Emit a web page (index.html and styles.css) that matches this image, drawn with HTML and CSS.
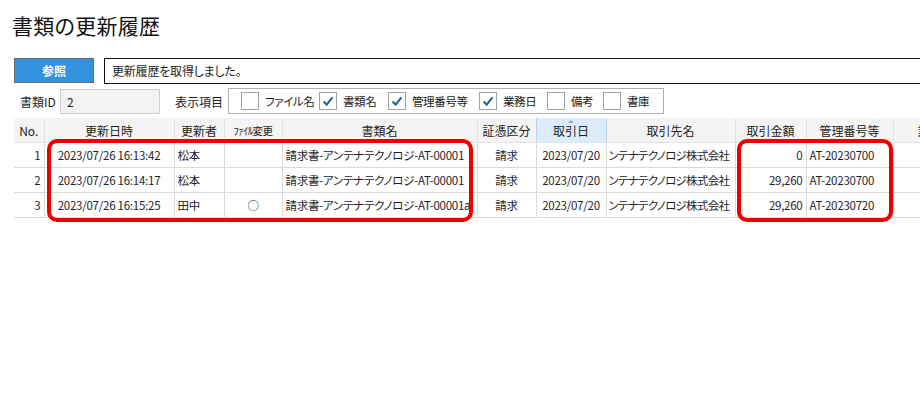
FILE: index.html
```html
<!DOCTYPE html>
<html lang="ja">
<head>
<meta charset="utf-8">
<link rel="stylesheet" href="styles.css">
</head>
<body>
<div class="page">
  <h1 class="title">書類の更新履歴</h1>
  <div class="toolbar">
    <button class="btn">参照</button>
    <div class="message">更新履歴を取得しました。</div>
  </div>
  <div class="filters">
    <span class="lbl lbl-id">書類ID</span>
    <div class="idbox">2</div>
    <span class="lbl lbl-items">表示項目</span>
    <div class="group">
      <span class="cb"></span><span class="cbl w1">ファイル名</span>
      <span class="cb on"><svg viewBox="0 0 18 18"><path d="M4 9.5 L7.5 13 L14 5" fill="none" stroke="#1f63a8" stroke-width="2.4"/></svg></span><span class="cbl w2">書類名</span>
      <span class="cb on"><svg viewBox="0 0 18 18"><path d="M4 9.5 L7.5 13 L14 5" fill="none" stroke="#1f63a8" stroke-width="2.4"/></svg></span><span class="cbl w3">管理番号等</span>
      <span class="cb on"><svg viewBox="0 0 18 18"><path d="M4 9.5 L7.5 13 L14 5" fill="none" stroke="#1f63a8" stroke-width="2.4"/></svg></span><span class="cbl w4">業務日</span>
      <span class="cb"></span><span class="cbl w5">備考</span>
      <span class="cb"></span><span class="cbl w6">書庫</span>
    </div>
  </div>
  <div class="gridwrap">
    <table class="grid">
      <colgroup>
        <col class="c-no"><col class="c-dt"><col class="c-user"><col class="c-file"><col class="c-name"><col class="c-kind"><col class="c-date"><col class="c-partner"><col class="c-amt"><col class="c-code"><col class="c-rest">
      </colgroup>
      <thead>
        <tr>
          <th>No.</th><th>更新日時</th><th>更新者</th><th class="half">ﾌｧｲﾙ変更</th><th>書類名</th><th>証憑区分</th><th class="sorted">取引日</th><th>取引先名</th><th>取引金額</th><th>管理番号等</th><th class="rest">業務日</th>
        </tr>
      </thead>
      <tbody>
        <tr>
          <td class="r">1</td><td class="c">2023/07/26 16:13:42</td><td>松本</td><td class="c"></td><td>請求書-アンテナテクノロジ-AT-00001</td><td class="c">請求</td><td class="c">2023/07/20</td><td class="clip">ンテナテクノロジ株式会社</td><td class="r">0</td><td>AT-20230700</td><td></td>
        </tr>
        <tr>
          <td class="r">2</td><td class="c">2023/07/26 16:14:17</td><td>松本</td><td class="c"></td><td>請求書-アンテナテクノロジ-AT-00001</td><td class="c">請求</td><td class="c">2023/07/20</td><td class="clip">ンテナテクノロジ株式会社</td><td class="r">29,260</td><td>AT-20230700</td><td></td>
        </tr>
        <tr>
          <td class="r">3</td><td class="c">2023/07/26 16:15:25</td><td>田中</td><td class="c">○</td><td>請求書-アンテナテクノロジ-AT-00001a</td><td class="c">請求</td><td class="c">2023/07/20</td><td class="clip">ンテナテクノロジ株式会社</td><td class="r">29,260</td><td>AT-20230720</td><td></td>
        </tr>
      </tbody>
    </table>
    <div class="mark mark-left"></div>
    <div class="mark mark-right"></div>
  </div>
</div>
</body>
</html>
```

FILE: styles.css
```css
html, body {
  margin: 0;
  padding: 0;
  background: #ffffff;
}
body {
  font-family: "Noto Sans CJK JP", "Noto Sans", sans-serif;
  font-feature-settings: "palt";
  color: #1e1e1e;
  font-size: 12px;
  width: 920px;
  height: 400px;
  overflow: hidden;
}
.page {
  position: relative;
}
.title {
  margin: 0;
  padding: 10px 0 0 12px;
  height: 48px;
  box-sizing: border-box;
  font-size: 21px;
  line-height: 30px;
  font-weight: normal;
  color: #111;
  letter-spacing: 0.3px;
}
.toolbar {
  display: flex;
  align-items: stretch;
  padding-left: 14px;
  margin-top: 10px;
  height: 26px;
}
.btn {
  width: 80px;
  height: 25px;
  box-sizing: border-box;
  background: #3391dd;
  border: 1px solid #6b6b6b;
  color: #fff;
  font-family: inherit;
  font-feature-settings: "palt";
  font-weight: bold;
  font-size: 12px;
  padding: 0;
  margin: 0;
  border-radius: 0;
}
.message {
  margin-left: 10px;
  flex: 1;
  border: 1px solid #111;
  border-right: none;
  box-sizing: border-box;
  height: 26px;
  line-height: 24px;
  padding-left: 7px;
  font-size: 12px;
  letter-spacing: -0.2px;
}
.filters {
  display: flex;
  align-items: center;
  margin-top: 4px;
  height: 26px;
}
.lbl {
  font-size: 12px;
}
.lbl-id {
  margin-left: 20px;
  width: 40px;
}
.idbox {
  width: 100px;
  height: 25px;
  box-sizing: border-box;
  background: #f2f2f2;
  border: 1px solid #cfcfcf;
  line-height: 23px;
  padding-left: 6px;
}
.lbl-items {
  margin-left: 15px;
  width: 53px;
}
.group {
  display: flex;
  align-items: center;
  width: 436px;
  height: 26px;
  box-sizing: border-box;
  border: 1px solid #b0b0b0;
  padding-left: 12px;
}
.cb {
  width: 18px;
  height: 18px;
  box-sizing: border-box;
  border: 1px solid #a3a3a3;
  background: #fff;
  display: block;
  margin-right: 6px;
  flex: none;
}
.cb svg {
  display: block;
  width: 16px;
  height: 16px;
}
.cbl {
  display: block;
  flex: none;
  font-size: 11.5px;
  letter-spacing: -0.4px;
  white-space: nowrap;
}
.w1 { width: 54px; }
.w2 { width: 45px; }
.w3 { width: 67px; }
.w4 { width: 44px; }
.w5 { width: 32px; }
.gridwrap {
  position: relative;
  margin-top: 4px;
  margin-left: 14px;
}
.grid {
  border-collapse: collapse;
  table-layout: fixed;
  width: 940px;
  font-size: 12px;
}
.c-no { width: 30px; }
.c-dt { width: 130px; }
.c-user { width: 50px; }
.c-file { width: 58px; }
.c-name { width: 195px; }
.c-kind { width: 59px; }
.c-date { width: 70px; }
.c-partner { width: 129px; }
.c-amt { width: 71px; }
.c-code { width: 87px; }
.c-rest { width: 61px; }
.grid th {
  height: 24px;
  padding: 0;
  font-weight: normal;
  background: #f4f4f4;
  border-left: 1px solid #e2e2e2;
  border-bottom: 1px solid #e4e4e4;
  text-align: center;
  white-space: nowrap;
  overflow: hidden;
  color: #222;
}
.grid th:first-child {
  border-left: none;
}
.grid th.half {
  font-size: 10.5px;
  letter-spacing: -0.5px;
}
.grid th.sorted {
  background: #dcecfa;
  border-left: 1px solid #b5d6f1;
  border-right: 1px solid #b5d6f1;
  position: relative;
}
.grid th.sorted::before {
  content: "";
  position: absolute;
  left: 31px;
  top: 2px;
  border-left: 3px solid transparent;
  border-right: 3px solid transparent;
  border-bottom: 3px solid #8fb0cf;
}
.grid th.rest {
  text-align: left;
  padding-left: 24px;
}
.grid td {
  height: 24px;
  padding: 0 3px;
  border-left: 1px solid #dadada;
  border-bottom: 1px solid #dadada;
  white-space: nowrap;
  overflow: hidden;
  color: #1e1e2a;
  font-size: 11.5px;
  letter-spacing: -0.25px;
}
.grid td:first-child {
  border-left: none;
}
.grid td.r { text-align: right; }
.grid td.c { text-align: center; padding: 0; }
.grid td.clip {
  padding-left: 2px;
  letter-spacing: -0.7px;
}
.mark {
  position: absolute;
  top: 21px;
  height: 83px;
  box-sizing: border-box;
  border: 4px solid #ee0000;
  border-radius: 10px;
}
.mark-left {
  left: 33px;
  width: 426px;
}
.mark-right {
  left: 723px;
  width: 156px;
}
```
